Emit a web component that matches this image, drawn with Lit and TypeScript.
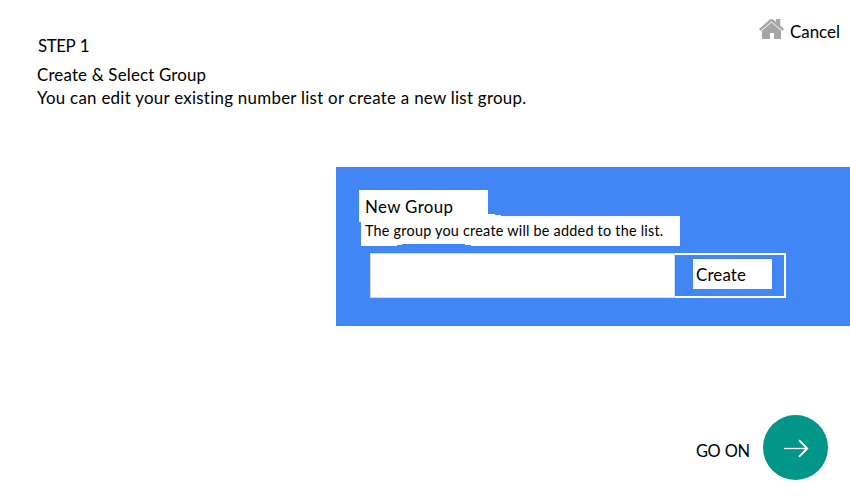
import { LitElement, html, css } from "lit";
import { customElement } from "lit/decorators.js";

@customElement("app-root")
export class AppRoot extends LitElement {
  static styles = css`
    :host {
      display: flex;
      flex-direction: column;
      box-sizing: border-box;
      width: 850px;
      height: 500px;
      overflow: hidden;
      background: #fff;
      color: #000;
      font: 16.9px/24px Lato, "Liberation Sans", sans-serif;
      font-variant-ligatures: none;
      white-space: nowrap;
    }
    svg { display: block; flex: none; }
    header {
      display: flex;
      justify-content: space-between;
      height: 167px;
      flex: none;
    }
    .intro { padding: 34px 0 0 37px; }
    .step { padding-left: 1px; letter-spacing: -0.45px; word-spacing: 1.2px; }
    .title { margin-top: 5px; letter-spacing: 0.17px; }
    .desc { margin-top: -1px; letter-spacing: 0.275px; }
    .cancel { display: flex; padding-top: 18px; width: 91px; height: 26px; }
    .cancel span { padding: 2px 0 0 6px; }
    .panel {
      box-sizing: border-box;
      margin-left: 336px;
      height: 159px;
      flex: none;
      padding: 23px 0 0 23px;
      background: #4285f4;
    }
    .name {
      box-sizing: border-box;
      width: 129px;
      height: 32px;
      padding: 5px 0 0 6px;
      background: #fff;
      letter-spacing: 0.35px;
    }
    .hint {
      position: relative;
      box-sizing: border-box;
      width: 319px;
      height: 30px;
      margin: -6px 0 0 2px;
      padding: 3px 0 0 4px;
      background: #fff;
      font-size: 14.4px;
      letter-spacing: 0.23px;
    }
    .edge { position: absolute; left: 0; top: -2px; }
    .hint span { position: relative; }
    .form { display: flex; margin: 7px 0 0 11px; height: 45px; }
    input {
      box-sizing: border-box;
      width: 305px;
      height: 45px;
      margin: 0;
      padding: 0 10px;
      border: 1px solid #d9dbdf;
      border-radius: 0;
      background: #fff;
      font: inherit;
      outline: none;
    }
    button { font: inherit; color: inherit; cursor: pointer; }
    .create {
      box-sizing: border-box;
      width: 111px;
      height: 45px;
      margin: 0;
      padding: 4px 12px 7px 18px;
      border: 2px solid #fff;
      border-left: 0;
      background: none;
      text-align: left;
    }
    .create span {
      display: block;
      box-sizing: border-box;
      width: 79px;
      height: 30px;
      padding: 4px 0 0 3px;
      background: #fff;
      letter-spacing: 0.15px;
    }
    footer {
      display: flex;
      justify-content: flex-end;
      gap: 14px;
      padding: 89px 22px 0 0;
    }
    .go { padding-top: 24px; width: 53px; font-size: 16.4px; letter-spacing: -0.5px; word-spacing: 1px; }
    .next { width: 65px; height: 65px; padding: 0; border: 0; border-radius: 50%; background: #009688; }
  `;

  render() {
    return html`
      <header>
        <div class="intro">
          <div class="step">STEP 1</div>
          <div class="title">Create &amp; Select Group</div>
          <div class="desc">You can edit your existing number list or create a new list group.</div>
        </div>
        <div class="cancel">
          <svg width="25" height="22" viewBox="0 0 25 22" fill="#a6a6a6">
            <path d="M12.5 4.4 22 12.6V21h-7v-6h-4v6H3v-8.4z" />
            <path d="M0 11 10.9 1.6q1.6-1.2 3.2 0L17 4V1h4.2v6.6L25 11l-1.5 1.8L12.5 3.6 1.5 12.8z" />
          </svg>
          <span>Cancel</span>
        </div>
      </header>
      <section class="panel">
        <div class="name">New Group</div>
        <div class="hint">
          <svg class="edge" width="319" height="32" shape-rendering="crispEdges">
            <path fill="#fff" d="M127 0h7v1h6v1h-13z" />
            <path fill="#4285f4" d="M36 32v-1h5v-1h63v1h6v1z" />
          </svg>
          <span>The group you create will be added to the list.</span>
        </div>
        <div class="form">
          <input type="text" aria-label="New Group" />
          <button class="create"><span>Create</span></button>
        </div>
      </section>
      <footer>
        <div class="go">GO ON</div>
        <button class="next" aria-label="GO ON">
          <svg width="65" height="65" viewBox="0 0 65 65" fill="none" stroke="#fff" stroke-width="1.6">
            <path d="M21 33.5h23" stroke-width="1.3" />
            <path d="M36 25.2l8.2 8.3-8.2 8.3" stroke-width="1.9" />
          </svg>
        </button>
      </footer>
    `;
  }
}
